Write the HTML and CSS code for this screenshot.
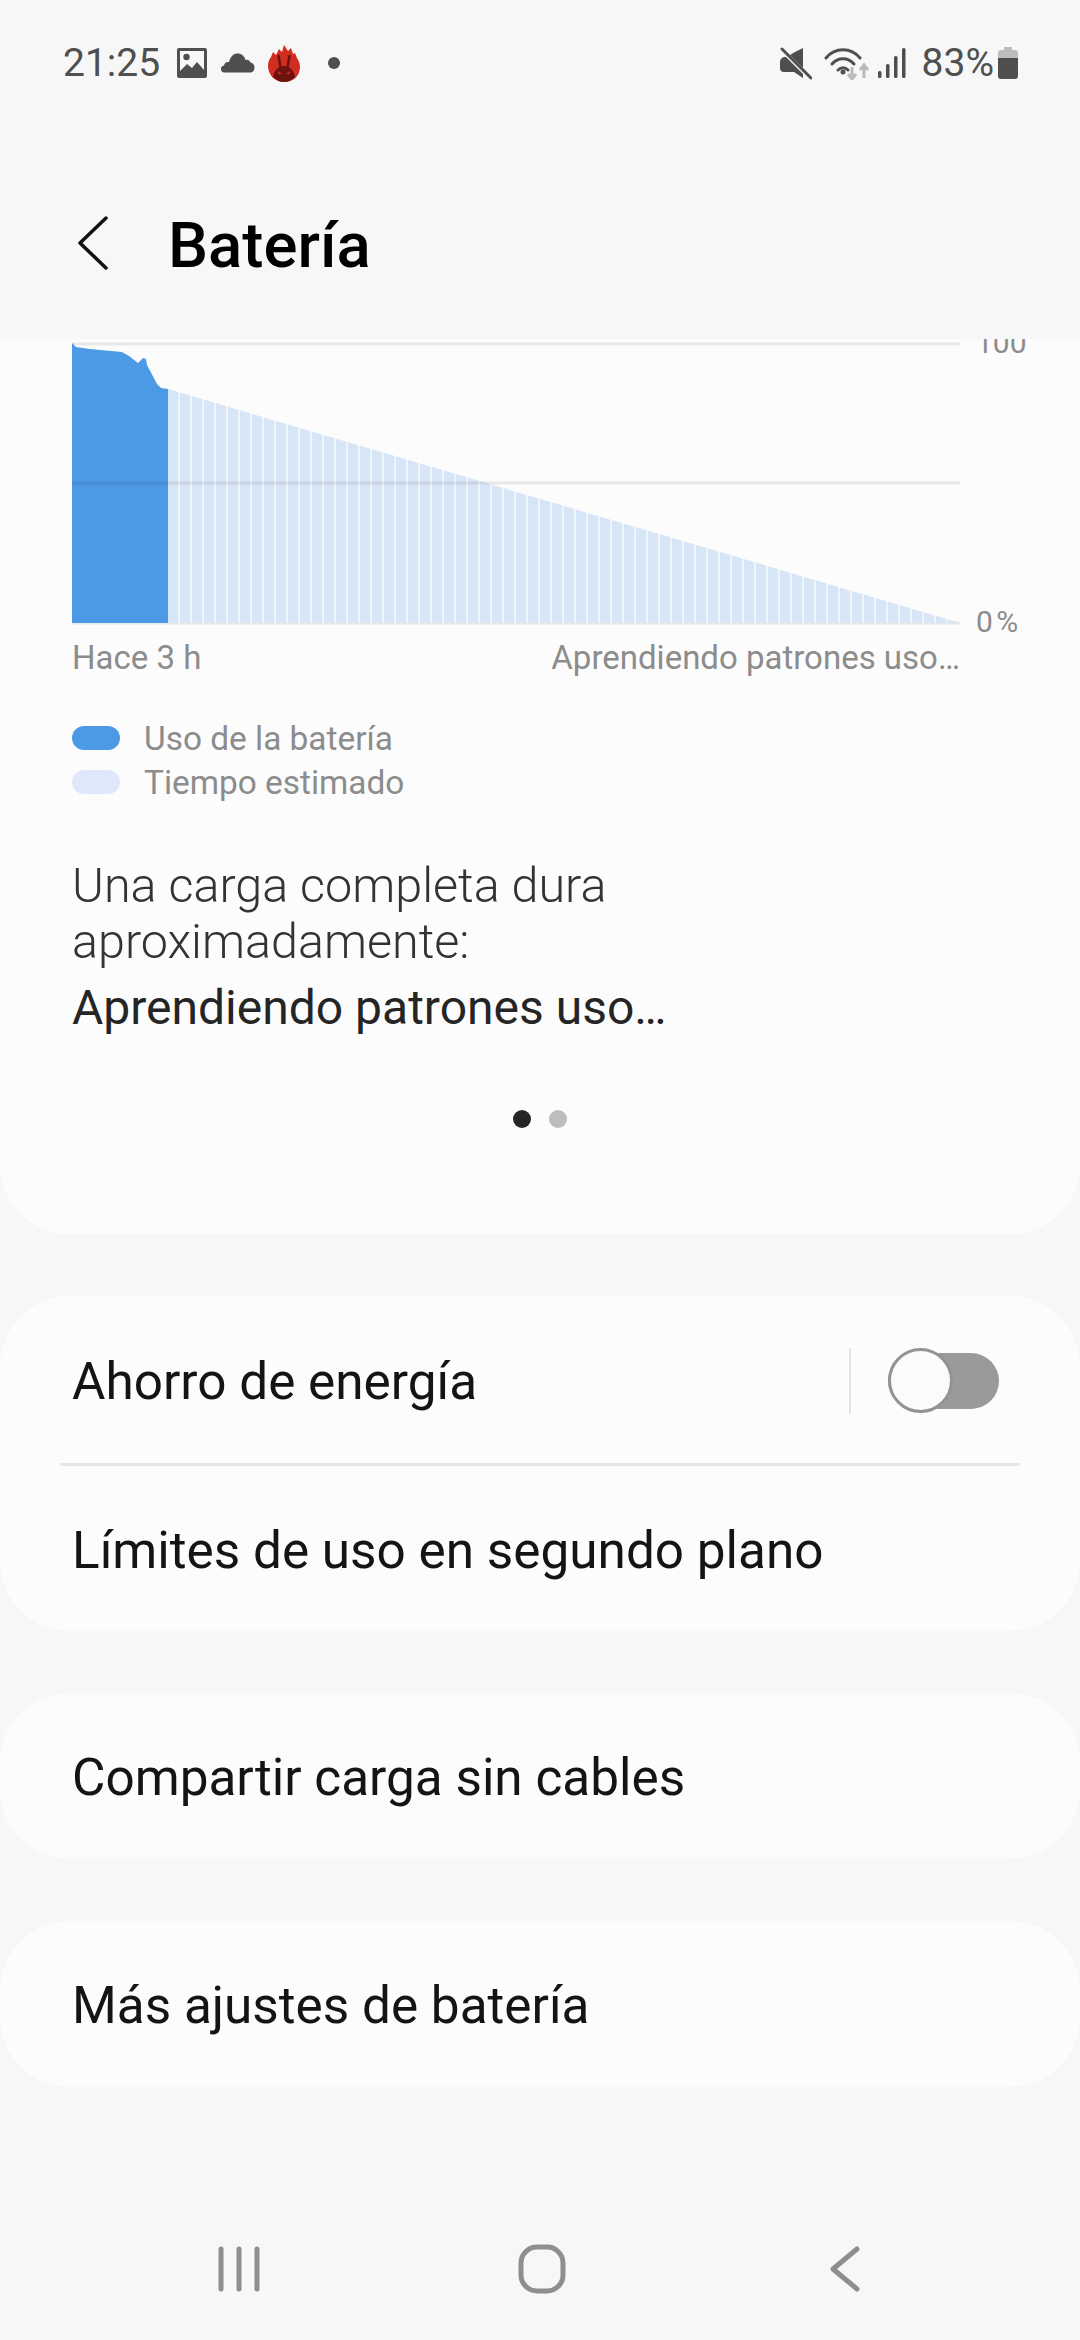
FILE: index.html
```html
<!DOCTYPE html>
<html lang="es">
<head>
    <meta charset="UTF-8">
    <meta name="viewport" content="width=device-width, initial-scale=1.0">
    <title>Batería</title>
    <link rel="stylesheet" href="styles.css">
</head>
<body>
    <div class="status-bar">
        <div class="status-left">
            <span class="time">21:25</span>
            <svg class="icon-image" width="30" height="30" viewBox="0 0 30 30">
                <path fill="#4f4f4f" fill-rule="evenodd" d="M2 0h26a2 2 0 0 1 2 2v26a2 2 0 0 1-2 2H2a2 2 0 0 1-2-2V2a2 2 0 0 1 2-2zM3 3v20l7-7 5 4 5-6 7 8V3z"/>
                <circle cx="9.500" cy="9" r="3.200" fill="#4f4f4f"/>
            </svg>
            <svg class="icon-cloud" width="34" height="20" viewBox="0 0 34 20">
                <path fill="#4f4f4f" d="M4 19.500a3.500 3.500 0 0 1-1-7c.5-3 3-4 5-3.500C9.500 3 13 .5 16.500.5c4 0 7 2.500 8 6.500 1.500-.5 4-.2 5 2.500 2 .3 4 2 4 5s-2 5-4 5z"/>
            </svg>
            <svg class="icon-antutu" width="32" height="37" viewBox="0 0 32 37">
                <path fill="#cf2e20" d="M16 37C7 37 0 30 0 21c0-3 1-7 3-9l2-5 3 3 3-6 3 3 2-7 4 6 3-3 2 6 2-1 2 5c2 3 3 6 3 9 0 9-7 15-16 15z"/>
                <path fill="#6e1210" d="M5 32c1-7 6-11 11-11s10 4 11 11c-3 3-7 5-11 5s-8-2-11-5z"/>
                <path fill="none" stroke="#6e1210" stroke-width="2.500" stroke-linecap="round" d="M10.500 11l2 11M21.500 11l-2 11"/>
                <path fill="#cf2e20" d="M9 26l5 2.500-3 1zM23 26l-5 2.500 3 1z"/>
            </svg>
            <span class="notif-dot"></span>
        </div>
        <div class="status-right">
            <svg class="icon-mute" width="33" height="33" viewBox="0 0 33 33">
                <path fill="#4f4f4f" d="M24 1v20L11 8l5-3zM7 10l17 17v4l-9-6H5a4 4 0 0 1-4-4v-6a5 5 0 0 1 6-5z"/>
                <path stroke="#4f4f4f" stroke-width="3" stroke-linecap="round" d="M3 2l29 29"/>
            </svg>
            <svg class="icon-wifi" width="45" height="33" viewBox="0 0 45 33">
                <g fill="none" stroke="#4f4f4f" stroke-width="3" stroke-linecap="round">
                    <path d="M2 11C11 0 27 0 36 11"/>
                    <path d="M8 17c6-7 16-7 22 0"/>
                    <path d="M14 23c3-3 7-3 10 0"/>
                </g>
                <circle cx="19" cy="25" r="2.500" fill="#4f4f4f"/>
                <path fill="none" stroke="#b9b9b9" stroke-width="3" d="M28 20v12M24 27l4 5 4-5M40 31V18M36 23l4-5 4 5"/>
            </svg>
            <svg class="icon-signal" width="28" height="30" viewBox="0 0 28 30">
                <g fill="#4f4f4f">
                    <rect x="0" y="23" width="3.500" height="7" rx="1.500"/>
                    <rect x="8" y="16" width="3.500" height="14" rx="1.500"/>
                    <rect x="16" y="8" width="3.500" height="22" rx="1.500"/>
                    <rect x="24" y="0" width="3.500" height="30" rx="1.500"/>
                </g>
            </svg>
            <span class="percent">83%</span>
            <svg class="icon-battery" width="20" height="32" viewBox="0 0 20 32">
                <path fill="#bdbdbd" d="M6 0h8v3h3a3 3 0 0 1 3 3v5H0V6a3 3 0 0 1 3-3h3z"/>
                <path fill="#4f4f4f" d="M0 11h20v18a3 3 0 0 1-3 3H3a3 3 0 0 1-3-3z"/>
            </svg>
        </div>
    </div>

    <div class="app-bar">
        <svg class="back" width="34" height="56" viewBox="0 0 34 56">
            <path fill="none" stroke="#111" stroke-width="3.500" stroke-linecap="round" stroke-linejoin="round" d="M30 3L4 28l26 25"/>
        </svg>
        <h1>Batería</h1>
    </div>

    <div class="card card-chart">
        <svg class="chart" width="1008" height="300" viewBox="0 0 1008 300">
            <defs>
                <pattern id="bars" width="12" height="300" patternUnits="userSpaceOnUse" x="96">
                    <rect width="10" height="300" fill="#d7e6f7"/>
                </pattern>
            </defs>
            <path d="M0 5H888M0 284H888" stroke="#e8e8e8" stroke-width="3"/>
            <polygon points="96,50 888,284 96,284" fill="#eff4fb"/>
            <polygon points="96,50 888,284 96,284" fill="url(#bars)"/>
            <polygon points="0,4 4,8 18,10 50,13 57,17 66,24 71,19 74,20 75,26 85,45 89,49 96,50 96,284 0,284" fill="#4c9ae6"/>
            <path d="M0 144H888" stroke="#000" stroke-opacity="0.080" stroke-width="3"/>
            <text class="axis-label" x="904" y="14">100</text>
            <text class="axis-label axis-zero" x="904" y="293">0 %</text>
        </svg>
        <div class="chart-labels">
            <span>Hace 3 h</span>
            <span>Aprendiendo patrones uso…</span>
        </div>
        <div class="legend">
            <div class="legend-item"><span class="swatch swatch-used"></span>Uso de la batería</div>
            <div class="legend-item"><span class="swatch swatch-est"></span>Tiempo estimado</div>
        </div>
        <p class="charge-info">Una carga completa dura<br>aproximadamente:</p>
        <p class="charge-value">Aprendiendo patrones uso…</p>
        <div class="pager">
            <span class="pager-dot active"></span>
            <span class="pager-dot"></span>
        </div>
    </div>

    <div class="card">
        <div class="row row-first">
            <span>Ahorro de energía</span>
            <div class="row-switch">
                <span class="switch-sep"></span>
                <span class="switch"><span class="thumb"></span></span>
            </div>
        </div>
        <div class="row row-second">Límites de uso en segundo plano</div>
    </div>

    <div class="card">
        <div class="row">Compartir carga sin cables</div>
    </div>

    <div class="card">
        <div class="row">Más ajustes de batería</div>
    </div>

    <div class="nav-bar">
        <svg width="42" height="46" viewBox="0 0 42 46">
            <path stroke="#8e8e8e" stroke-width="5" stroke-linecap="round" d="M3 3v40M21 3v40M39 3v40"/>
        </svg>
        <svg width="48" height="50" viewBox="0 0 48 50">
            <rect x="3" y="3" width="42" height="44" rx="16" fill="none" stroke="#8e8e8e" stroke-width="5"/>
        </svg>
        <svg width="30" height="46" viewBox="0 0 30 46">
            <path fill="none" stroke="#8e8e8e" stroke-width="5" stroke-linecap="round" stroke-linejoin="round" d="M27 3L3 23l24 20"/>
        </svg>
    </div>
</body>
</html>
```

FILE: styles.css
```css
* {
    margin: 0;
    padding: 0;
    box-sizing: border-box;
    font-family: 'Roboto', 'Liberation Sans', sans-serif;
}

body {
    width: 1080px;
    height: 2340px;
    background-color: #f7f7f7;
    color: #141414;
    overflow: hidden;
}

svg {
    display: block;
    flex-shrink: 0;
}

.status-bar {
    height: 126px;
    display: flex;
    justify-content: space-between;
    align-items: center;
    padding: 0 62px 0 63px;
    color: #4f4f4f;
}

.status-left,
.status-right {
    display: flex;
    align-items: center;
}

.time,
.percent {
    font-size: 39px;
    line-height: 40px;
}

.icon-image {
    margin-left: 17px;
}

.icon-cloud {
    margin-left: 14px;
}

.icon-antutu {
    margin-left: 13px;
}

.notif-dot {
    width: 12px;
    height: 12px;
    border-radius: 50%;
    background-color: #4f4f4f;
    margin-left: 28px;
}

.icon-wifi {
    margin-left: 12px;
}

.icon-signal {
    margin-left: 9px;
}

.percent {
    margin-left: 16px;
}

.icon-battery {
    margin-left: 4px;
}

.app-bar {
    height: 213px;
    display: flex;
    align-items: center;
    padding: 26px 0 0 76px;
}

.back {
    margin-top: -6px;
}

.app-bar h1 {
    font-size: 63.500px;
    font-weight: 500;
    color: #000;
    margin-left: 58px;
}

.card {
    background-color: #fcfcfc;
    border-radius: 70px;
    margin-bottom: 62px;
}

.card-chart {
    height: 895px;
    padding-left: 72px;
    border-radius: 0 0 70px 70px;
}

.axis-label {
    font-size: 30px;
    fill: #8c8c8c;
}

.axis-zero {
    word-spacing: -4px;
}

.chart-labels {
    width: 888px;
    display: flex;
    justify-content: space-between;
    font-size: 33px;
    line-height: 38px;
    color: #8c8c8c;
}

.legend {
    margin-top: 39px;
    font-size: 33.400px;
    color: #8c8c8c;
}

.legend-item {
    height: 44px;
    display: flex;
    align-items: center;
    gap: 24px;
}

.swatch {
    width: 48px;
    height: 24px;
    border-radius: 12px;
}

.swatch-used {
    background-color: #4c9ae6;
}

.swatch-est {
    background-color: #dfe8fb;
}

.charge-info {
    margin-top: 54px;
    font-size: 48.500px;
    font-weight: 300;
    line-height: 56px;
    color: #333;
}

.charge-value {
    margin-top: 10px;
    font-size: 48px;
    line-height: 56px;
    color: #252525;
}

.pager {
    margin: 74px 0 0 441px;
    display: flex;
    gap: 18px;
}

.pager-dot {
    width: 18px;
    height: 18px;
    border-radius: 50%;
    background-color: #bdbdbd;
}

.pager-dot.active {
    background-color: #252525;
}

.row {
    height: 166px;
    display: flex;
    align-items: center;
    justify-content: space-between;
    padding: 3px 72px 0;
    font-size: 51.300px;
}

.row-first {
    height: 170px;
    border-bottom: 3px solid #e6e6e6;
    margin: 0 60px;
    padding: 3px 21px 0 12px;
}

.row-second {
    height: 165px;
}

.row-switch {
    display: flex;
    align-items: center;
    gap: 37px;
}

.switch-sep {
    width: 2px;
    height: 66px;
    background-color: #e4e4e4;
}

.switch {
    position: relative;
    display: block;
    width: 111px;
    height: 56px;
    border-radius: 28px;
    background-color: #9a9a9a;
}

.thumb {
    position: absolute;
    left: 0;
    top: -5px;
    width: 65px;
    height: 65px;
    border-radius: 50%;
    background-color: #fbfbfb;
    border: 3px solid #939393;
}

.nav-bar {
    display: grid;
    grid-template-columns: 300px 312px 30px;
    align-items: center;
    padding-left: 218px;
    margin-top: 157px;
}
```
